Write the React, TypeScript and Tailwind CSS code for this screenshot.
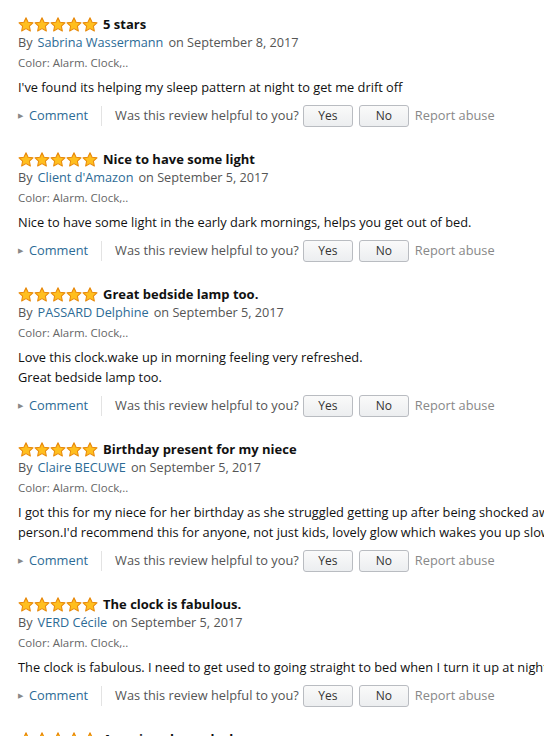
import React from 'react'

type Review = {
  title: string
  author: string
  date: string
  body: string[]
}

const reviews: Review[] = [
  {
    title: '5 stars',
    author: 'Sabrina Wassermann',
    date: 'September 8, 2017',
    body: ["I've found its helping my sleep pattern at night to get me drift off"],
  },
  {
    title: 'Nice to have some light',
    author: "Client d'Amazon",
    date: 'September 5, 2017',
    body: ['Nice to have some light in the early dark mornings, helps you get out of bed.'],
  },
  {
    title: 'Great bedside lamp too.',
    author: 'PASSARD Delphine',
    date: 'September 5, 2017',
    body: ['Love this clock.wake up in morning feeling very refreshed.', 'Great bedside lamp too.'],
  },
  {
    title: 'Birthday present for my niece',
    author: 'Claire BECUWE',
    date: 'September 5, 2017',
    body: [
      'I got this for my niece for her birthday as she struggled getting up after being shocked awake by a loud alarm. She is now a different',
      "person.I'd recommend this for anyone, not just kids, lovely glow which wakes you up slowly and gently.",
    ],
  },
  {
    title: 'The clock is fabulous.',
    author: 'VERD Cécile',
    date: 'September 5, 2017',
    body: ['The clock is fabulous. I need to get used to going straight to bed when I turn it up at night.'],
  },
  {
    title: 'Amazing alarm clock',
    author: 'Anonymous',
    date: 'September 4, 2017',
    body: ['Amazing alarm clock.'],
  },
]

function Star() {
  return (
    <svg width="16" height="15" viewBox="0 0 24 23" className="block">
      <path
        d="M12 1.2l3.2 6.9 7.5.9-5.5 5.1 1.5 7.4L12 17.8l-6.7 3.7 1.5-7.4L1.3 9l7.5-.9z"
        fill="#ffbf1f"
        stroke="#e88a0c"
        strokeWidth="1.6"
        strokeLinejoin="round"
      />
    </svg>
  )
}

function Stars() {
  return (
    <div className="flex items-center">
      {[0, 1, 2, 3, 4].map(i => (
        <Star key={i} />
      ))}
    </div>
  )
}

function VoteButton({ label }: { label: string }) {
  return (
    <button className="h-[22px] w-[50px] rounded-[3px] border border-[#b9bcc1] bg-gradient-to-b from-[#fafafa] to-[#eceef0] text-[12px] text-[#333] leading-none">
      {label}
    </button>
  )
}

function ReviewItem({ r }: { r: Review }) {
  return (
    <div className="pb-[24px]">
      <div className="flex items-center gap-[5px] h-[17px]">
        <Stars />
        <span className="text-[13px] font-bold text-[#111]">{r.title}</span>
      </div>
      <div className="h-[20px] flex items-center text-[12.7px] text-[#555] whitespace-nowrap">
        By <span className="ml-[5px] text-[#2c6b96]">{r.author}</span>
        <span className="ml-[5px]">on {r.date}</span>
      </div>
      <div className="h-[20px] flex items-center text-[11.5px] text-[#666]">Color: Alarm. Clock,..</div>
      <div className="mt-[4px] text-[12.8px] text-[#111] leading-[20px] whitespace-nowrap">
        {r.body.map((l, i) => (
          <div key={i}>{l}</div>
        ))}
      </div>
      <div className="mt-[8px] h-[22px] flex items-center text-[12.8px] whitespace-nowrap">
        <span className="text-[#888] text-[7px] mr-[6px]">▶</span>
        <span className="text-[#2c6b96]">Comment</span>
        <span className="mx-[13px] h-[20px] w-px bg-[#e3e3e3]" />
        <span className="text-[#555]">Was this review helpful to you?</span>
        <div className="ml-[4px] flex gap-[6px]">
          <VoteButton label="Yes" />
          <VoteButton label="No" />
        </div>
        <span className="ml-[6px] text-[#888]">Report abuse</span>
      </div>
    </div>
  )
}

export default function App() {
  return (
    <div
      className="w-[544px] h-[736px] overflow-hidden bg-white pl-[18px] pt-[16px]"
      style={{ fontFamily: '"Open Sans", "Noto Sans", sans-serif' }}
    >
      {reviews.map(r => (
        <ReviewItem key={r.title} r={r} />
      ))}
    </div>
  )
}
